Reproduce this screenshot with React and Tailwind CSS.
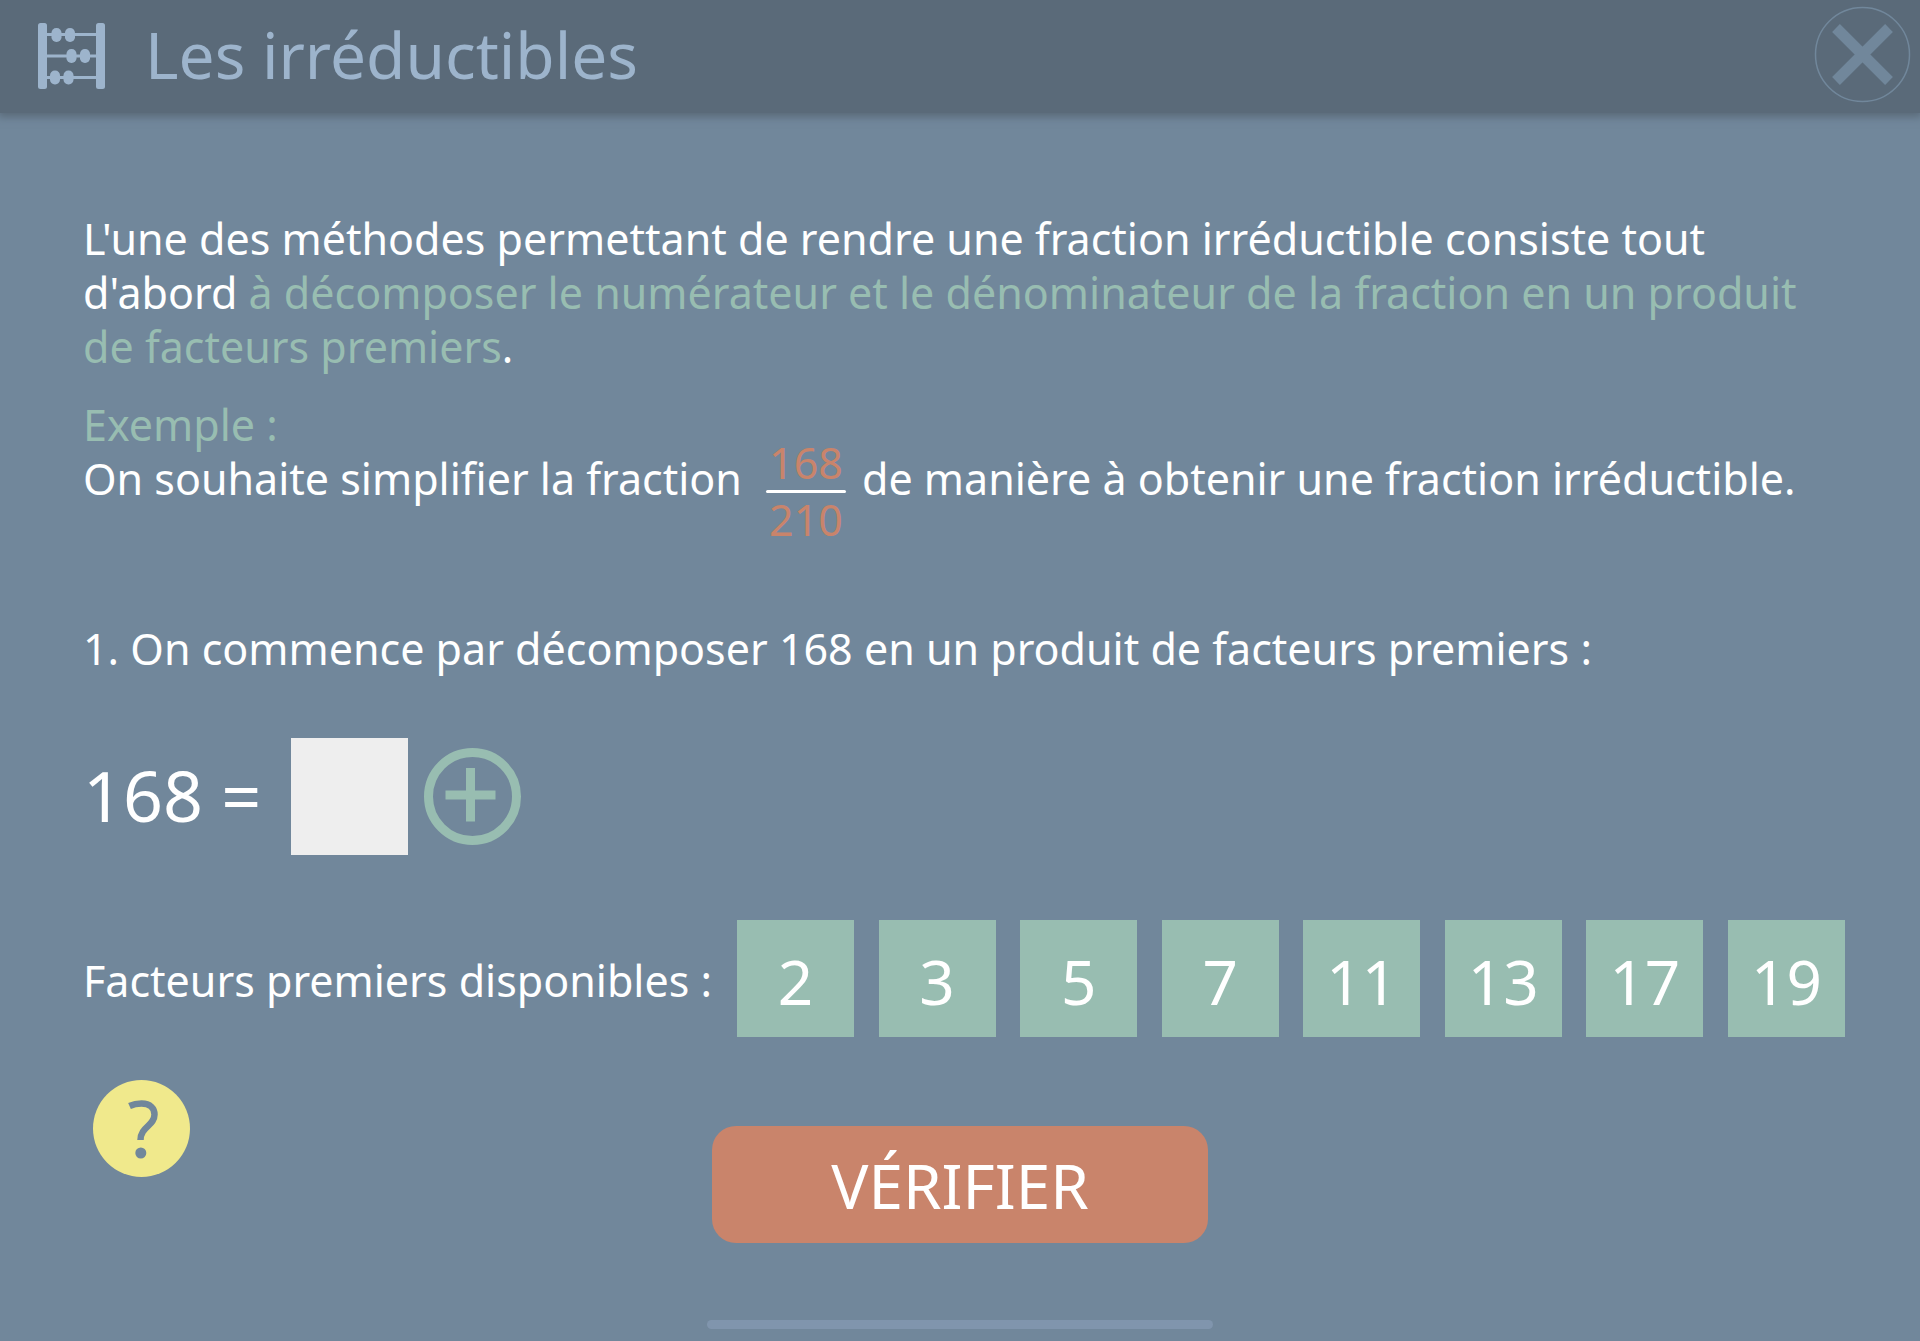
const FACTORS = [2, 3, 5, 7, 11, 13, 17, 19];

function AbacusIcon() {
  return (
    <svg aria-hidden="true" viewBox="-1 1 68 68" className="size-[68px] shrink-0 fill-[#9db4cc]">
      <rect x="0" y="1" width="9" height="66" rx="2.5" />
      <rect x="58" y="1" width="9" height="66" rx="2.5" />
      <rect x="5" y="11" width="56" height="3" />
      <rect x="5" y="32.5" width="56" height="3" />
      <rect x="5" y="54" width="56" height="3" />
      <rect x="13.5" y="6" width="10" height="14" rx="4.8" />
      <rect x="27" y="6" width="10" height="14" rx="4.8" />
      <rect x="28.5" y="27" width="10" height="14" rx="4.8" />
      <rect x="42" y="27" width="10" height="14" rx="4.8" />
      <rect x="12" y="48.5" width="10" height="14" rx="4.8" />
      <rect x="25.5" y="48.5" width="10" height="14" rx="4.8" />
    </svg>
  );
}

function Header() {
  return (
    <header className="flex h-[113px] items-center bg-[#5a6a79] pr-[9px] pl-[37px] shadow-[0_2px_8px_2px_#5a6a79]">
      <AbacusIcon />
      <h1 className="ml-10 pb-1 text-[64px] leading-[72px] text-[#9db4cc]">Les irréductibles</h1>
      <button type="button" aria-label="Fermer" className="mb-1 ml-auto">
        <svg viewBox="0 0 97 97" className="size-[97px]" fill="none" stroke="#71879b">
          <circle cx="48.5" cy="48.5" r="47" strokeWidth="1.5" />
          <path d="M22 22 75 75M75 22 22 75" strokeWidth="11" />
        </svg>
      </button>
    </header>
  );
}

function Fraction({ top, bottom }) {
  return (
    <span className="-mt-4 mr-4 ml-6 flex w-20 flex-col items-center text-[#c9846b]">
      <span>{top}</span>
      <span className="h-[3px] w-full rounded-full bg-white" />
      <span>{bottom}</span>
    </span>
  );
}

export default function App() {
  return (
    <div className="flex min-h-screen flex-col bg-[#71879b] font-['Noto_Sans',sans-serif] text-[43px] leading-[54px] whitespace-nowrap text-white">
      <Header />
      <main className="flex flex-1 flex-col pt-[99px] pr-[75px] pl-[83px]">
        <p>
          L'une des méthodes permettant de rendre une fraction irréductible consiste tout
          <br />
          d'abord{" "}
          <span className="text-[#98bdb1]">
            à décomposer le numérateur et le dénominateur de la fraction en un produit
            <br />
            de facteurs premiers
          </span>
          .
        </p>
        <p className="mt-6 text-[#98bdb1]">Exemple :</p>
        <p className="flex items-start">
          On souhaite simplifier la fraction
          <Fraction top="168" bottom="210" />
          de manière à obtenir une fraction irréductible.
        </p>
        <h2 className="mt-[75px]">1. On commence par décomposer 168 en un produit de facteurs premiers :</h2>
        <div className="mt-[62px] flex items-center">
          <label htmlFor="factor" className="w-[208px] pb-1 text-[70px] leading-[88px]">168 =</label>
          <input id="factor" type="text" className="h-[117px] w-[117px] bg-[#eeeeee] text-center text-[62px] text-[#71879b] outline-none" />
          <button type="button" aria-label="Ajouter un facteur" className="ml-4">
            <svg viewBox="0 0 97 97" className="size-[97px]" fill="none" stroke="#98bdb1">
              <circle cx="48.5" cy="48.5" r="44" strokeWidth="9" />
              <path d="M21.5 47H71.5M46.5 20V73.5" strokeWidth="9" />
            </svg>
          </button>
        </div>
        <div className="mt-[65px] flex items-center justify-between">
          <span className="pt-1">Facteurs premiers disponibles :</span>
          <div className="flex w-[1108px] justify-between">
            {FACTORS.map((n) => (
              <button key={n} type="button" className="size-[117px] bg-[#98bdb1] pt-1 text-[62px] leading-[72px]">
                {n}
              </button>
            ))}
          </div>
        </div>
        <div className="mt-[43px] grid grid-cols-[1fr_496px_1fr] pr-2">
          <button type="button" aria-label="Aide" className="ml-[10px] size-[97px] justify-self-start rounded-full bg-[#f0e98c]">
            <svg viewBox="0 0 97 97" className="size-[97px]" fill="none" stroke="#71879b">
              <path d="M36.5 26Q42 23.5 48.5 23.5C57.5 23.5 61.5 28.5 61.5 34.5C61.5 46 47.5 46.5 47.5 60" strokeWidth="6.5" />
              <circle cx="47.8" cy="73" r="5.5" fill="#71879b" stroke="none" />
            </svg>
          </button>
          <button type="button" className="mt-[46px] h-[117px] rounded-3xl bg-[#c9846b] text-[62px] leading-[72px]">
            VÉRIFIER
          </button>
        </div>
        <div className="mt-auto mb-3 -ml-2 h-[9px] w-[506px] self-center rounded-full bg-[#8095ad]" />
      </main>
    </div>
  );
}
